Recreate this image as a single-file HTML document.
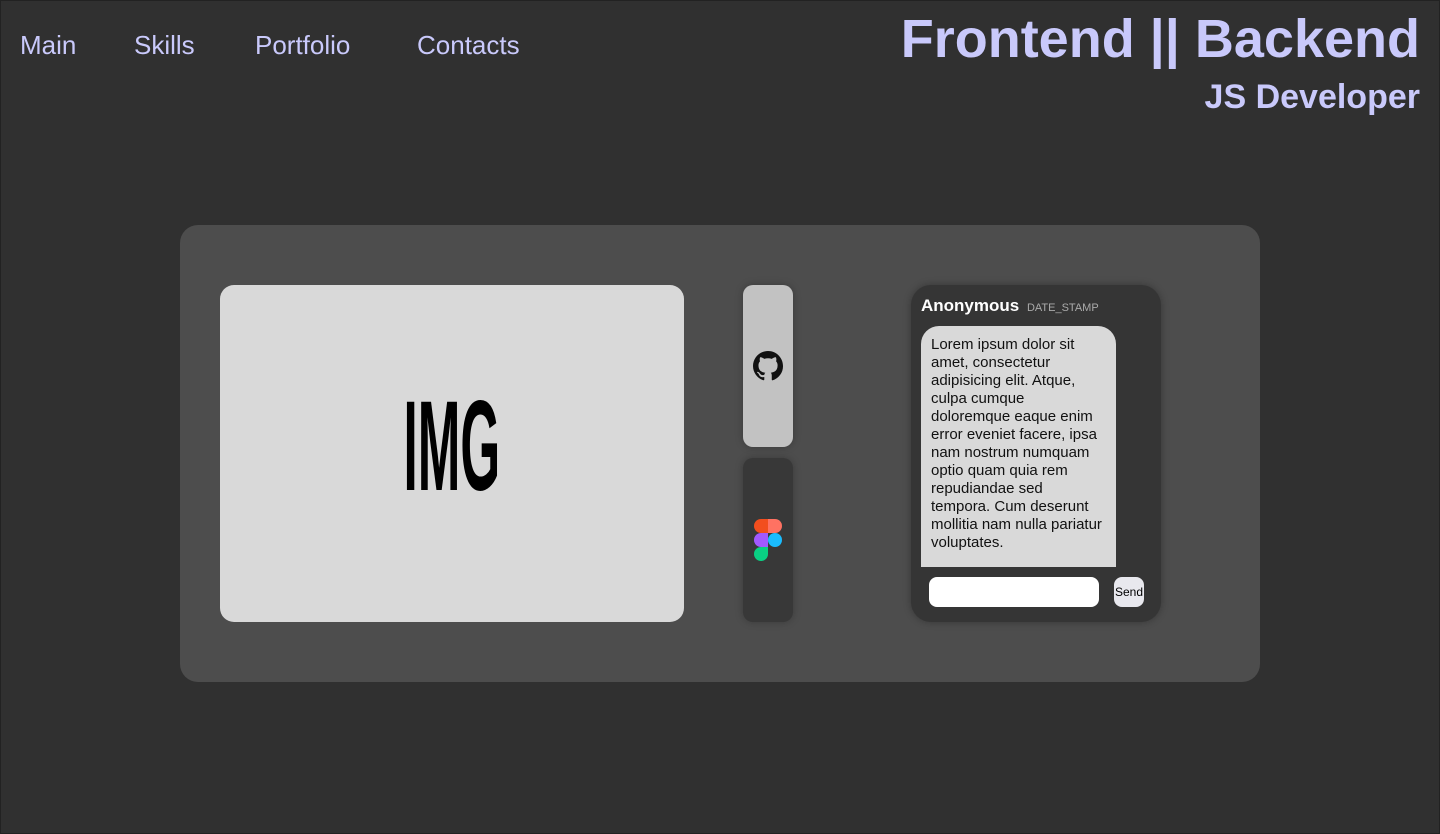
<!DOCTYPE html>
<html><head><meta charset="utf-8"><style>
*{margin:0;padding:0;box-sizing:border-box}
html,body{width:1440px;height:834px;overflow:hidden}
body{background:#303030;font-family:"Liberation Sans",sans-serif;position:relative;box-shadow:inset 0 0 0 1px #222}
.nav a{position:absolute;top:30px;color:#c9c9fb;font-size:26px;text-decoration:none}
.t1{position:absolute;right:20px;top:8px;color:#c9c9fb;font-size:54px;font-weight:bold}
.t2{position:absolute;right:20px;top:78px;color:#c9c9fb;font-size:34px;font-weight:bold}
.panel{position:absolute;left:180px;top:225px;width:1080px;height:457px;background:#4d4d4d;border-radius:18px}
.img{position:absolute;left:220px;top:285px;width:464px;height:337px;background:#d9d9d9;border-radius:14px;display:flex;align-items:center;justify-content:center;font-family:"Liberation Sans Narrow","Liberation Sans",sans-serif;font-weight:bold;font-size:128px}
.img span{display:inline-block;transform:scaleX(0.4);color:#000;margin-top:-14px}
.b{position:absolute;left:743px;width:50px;border-radius:10px;box-shadow:0 0 8px rgba(0,0,0,.25)}
.chat{position:absolute;left:911px;top:285px;width:250px;height:337px;background:#353535;border-radius:20px;box-shadow:0 0 8px rgba(0,0,0,.3)}
.name{position:absolute;left:10px;top:11px;color:#fff;font-weight:bold;font-size:17px}
.ds{color:#aaa;font-size:11px;font-weight:normal;margin-left:3px}
.msg{position:absolute;left:10px;top:41px;width:195px;height:241px;background:#d9d9d9;border-radius:18px 18px 0 0;padding:10px 12px 10px 10px;font-size:15px;line-height:18px;color:#111;overflow:hidden}
.in{position:absolute;left:18px;top:292px;width:170px;height:30px;background:#fff;border-radius:8px}
.send{position:absolute;left:203px;top:292px;width:30px;height:30px;background:#e8e8ee;border-radius:8px;font-size:12px;line-height:30px;color:#000;text-align:center}
</style></head><body>
<div class="nav"><a style="left:20px">Main</a><a style="left:134px">Skills</a><a style="left:255px">Portfolio</a><a style="left:417px">Contacts</a></div>
<div class="t1">Frontend || Backend</div>
<div class="t2">JS Developer</div>
<div class="panel"></div>
<div class="img"><span>IMG</span></div>
<div class="b" style="top:285px;height:162px;background:#c2c2c2">
<svg style="position:absolute;left:10px;top:66px" width="30" height="30" viewBox="0 0 16 16"><path fill="#111" d="M8 0C3.58 0 0 3.58 0 8c0 3.540 2.29 6.53 5.47 7.59.4.07.55-.17.55-.38v-1.33c-2.230.48-2.7-1.070-2.7-1.07-.36-.92-.89-1.17-.89-1.17-.73-.5.06-.49.06-.49.8.06 1.23.83 1.23.83.71 1.22 1.87.87 2.33.66.07-.52.28-.87.51-1.07-1.78-.2-3.64-.89-3.64-3.950 0-.87.31-1.59.82-2.15-.08-.2-.36-1.02.08-2.12 0 0 .67-.21 2.2.82a7.6 7.6 0 0 1 4 0c1.53-1.04 2.2-.82 2.2-.82.44 1.1.16 1.92.08 2.12.51.56.82 1.27.82 2.15 0 3.07-1.87 3.75-3.65 3.950.29.25.54.73.54 1.48v2.2c0 .21.15.46.55.38A8 8 0 0 0 16 8c0-4.42-3.58-8-8-8z"/></svg></div>
<div class="b" style="top:458px;height:164px;background:#383838">
<svg style="position:absolute;left:10px;top:60px" width="30" height="44" viewBox="0 0 30 44"><path fill="#f24e1e" d="M8 1h7v14H8a7 7 0 0 1 0-14z"/><path fill="#ff7262" d="M15 1h7a7 7 0 0 1 0 14h-7z"/><path fill="#a259ff" d="M8 15h7v14H8a7 7 0 0 1 0-14z"/><circle cx="22" cy="22" r="7" fill="#1abcfe"/><path fill="#0acf83" d="M8 29h7v7a7 7 0 1 1-7-7z"/></svg></div>
<div class="chat">
<div class="name">Anonymous <span class="ds">DATE_STAMP</span></div>
<div class="msg">Lorem ipsum dolor sit amet, consectetur adipisicing elit. Atque, culpa cumque doloremque eaque enim error eveniet facere, ipsa nam nostrum numquam optio quam quia rem repudiandae sed tempora. Cum deserunt mollitia nam nulla pariatur voluptates.</div>
<div class="in"></div><div class="send">Send</div>
</div>
</body></html>
